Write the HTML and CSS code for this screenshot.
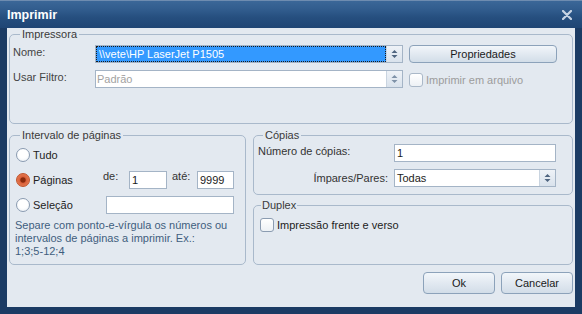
FILE: index.html
```html
<!DOCTYPE html>
<html>
<head>
<meta charset="utf-8">
<link rel="stylesheet" href="styles.css">
</head>
<body>
<div class="window">
  <div class="titlebar">
    <span class="title">Imprimir</span>
    <svg class="close" width="10" height="10" viewBox="0 0 10 10"><path d="M1 1L9 9M9 1L1 9" stroke="#c6d3e3" stroke-width="2.3" stroke-linecap="round"/></svg>
  </div>
  <div class="client">
    <fieldset class="group g-printer">
      <legend>Impressora</legend>
      <div class="prow">
        <span class="plabel">Nome:</span>
        <div class="combo">
          <div class="combo-text"><span class="sel">\\vete\HP LaserJet P1505</span></div>
          <div class="spin"><svg width="7" height="10" viewBox="0 0 7 10"><path d="M0.5 4L3.5 1L6.5 4Z M0.5 6L3.5 9L6.5 6Z" fill="#4f6580"/></svg></div>
        </div>
        <button class="btn btn-props">Propriedades</button>
      </div>
      <div class="prow">
        <span class="plabel">Usar Filtro:</span>
        <div class="combo">
          <div class="combo-text dis">Padrão</div>
          <div class="spin"><svg width="7" height="10" viewBox="0 0 7 10"><path d="M0.5 4L3.5 1L6.5 4Z M0.5 6L3.5 9L6.5 6Z" fill="#7f92a8"/></svg></div>
        </div>
        <div class="check dis-check"><span class="box"></span><span>Imprimir em arquivo</span></div>
      </div>
    </fieldset>

    <div class="lower">
      <fieldset class="group g-range">
        <legend>Intervalo de páginas</legend>
        <div class="rrow">
          <div class="ropt"><span class="radio"></span><span>Tudo</span></div>
        </div>
        <div class="rrow">
          <div class="ropt"><span class="radio on"></span><span>Páginas</span></div>
          <span class="ilabel w-de">de:</span>
          <div class="field w-from">1</div>
          <span class="ilabel w-ate">até:</span>
          <div class="field w-to">9999</div>
        </div>
        <div class="rrow">
          <div class="ropt wide"><span class="radio"></span><span>Seleção</span></div>
          <div class="field w-sel"></div>
        </div>
        <p class="help">Separe com ponto-e-vírgula os números ou<br>intervalos de páginas a imprimir. Ex.:<br>1;3;5-12;4</p>
      </fieldset>

      <div class="rightcol">
        <fieldset class="group g-copies">
          <legend>Cópias</legend>
          <div class="crow top">
            <span class="clabel">Número de cópias:</span>
            <div class="field w-copies">1</div>
          </div>
          <div class="crow">
            <span class="clabel right">Ímpares/Pares:</span>
            <div class="combo w-copies">
              <div class="combo-text plain">Todas</div>
              <div class="spin"><svg width="7" height="10" viewBox="0 0 7 10"><path d="M0.5 4L3.5 1L6.5 4Z M0.5 6L3.5 9L6.5 6Z" fill="#4f6580"/></svg></div>
            </div>
          </div>
        </fieldset>
        <fieldset class="group g-duplex">
          <legend>Duplex</legend>
          <div class="check"><span class="box"></span><span>Impressão frente e verso</span></div>
        </fieldset>
      </div>
    </div>

    <div class="actions">
      <button class="btn btn-dlg">Ok</button>
      <button class="btn btn-dlg">Cancelar</button>
    </div>
  </div>
</div>
</body>
</html>
```
FILE: styles.css
```css
* { box-sizing: border-box; }
html, body { margin: 0; padding: 0; }
body {
  width: 582px;
  height: 314px;
  overflow: hidden;
  font-family: "Liberation Sans", Arial, sans-serif;
  font-size: 11px;
  color: #2e2e2e;
  background: #1b3b64;
}
.window {
  width: 582px;
  height: 314px;
  background: #1b3b64;
  display: flex;
  flex-direction: column;
}
.titlebar {
  height: 28px;
  flex: none;
  display: flex;
  align-items: center;
  justify-content: space-between;
  padding: 0 10px 0 7px;
  border-top: 1px solid #6e8cb0;
  background: linear-gradient(#3b6798 0%, #305b8c 35%, #264f7f 60%, #1f4574 100%);
}
.title {
  color: #fff;
  font-weight: bold;
  font-size: 12.5px;
  line-height: 14px;
}
.close { display: block; }
.client {
  flex: 1;
  margin: 0 7px 7px 7px;
  background: #e3e9f0;
  padding: 0 2px;
  display: flex;
  flex-direction: column;
}
fieldset.group {
  margin: 0;
  min-width: 0;
  border: 1px solid #a9b9cb;
  border-radius: 5px;
  padding: 0;
}
legend {
  font-size: 11px;
  line-height: 13px;
  padding: 0 2px;
  color: #3a3a3a;
}
/* Impressora */
.g-printer { padding: 4px 0 35px 3px !important; }
.g-printer legend { margin-left: 7px; }
.prow {
  display: flex;
  align-items: flex-start;
  height: 18px;
}
.prow + .prow { margin-top: 7px; }
.plabel {
  width: 82px;
  line-height: 14px;
  color: #444;
}
.combo {
  width: 308px;
  height: 18px;
  border: 1px solid #a4b4c6;
  background: #fff;
  display: flex;
  margin-right: 6px;
}
.combo-text {
  flex: 1;
  min-width: 0;
  display: flex;
  align-items: center;
}
.combo-text.dis {
  color: #a2a2a2;
  padding-left: 1px;
}
.combo-text.plain { padding-left: 2px; color: #222; }
.sel {
  flex: 1;
  height: 16px;
  background: #3399ff;
  color: #fff;
  border: 1px dotted #1a1a1a;
  line-height: 14px;
  padding-left: 2px;
  white-space: nowrap;
}
.spin {
  width: 16px;
  flex: none;
  display: flex;
  align-items: center;
  justify-content: center;
  background: linear-gradient(#eef2f7, #d9e2ec);
  border-left: 1px solid #c9d4e0;
}
.spin svg { display: block; }
.btn {
  font-family: "Liberation Sans", Arial, sans-serif;
  font-size: 11px;
  color: #1a1a1a;
  border: 1px solid #8ca2ba;
  border-radius: 4px;
  background: linear-gradient(#f2f6fa 0%, #e2e9f1 50%, #d2dde8 100%);
  padding: 0;
  margin: 0;
}
.btn-props {
  width: 148px;
  height: 18px;
  line-height: 16px;
}
.check {
  display: flex;
  align-items: center;
  height: 14px;
}
.dis-check { margin-top: 3px; color: #9c9c9c; }
.box {
  width: 14px;
  height: 14px;
  border: 1px solid #8b9cb1;
  border-radius: 3px;
  background: linear-gradient(#ffffff, #edf1f5);
  margin-right: 3px;
  flex: none;
}
.dis-check .box { border-color: #aab8c8; }

/* lower area */
.lower {
  display: flex;
  gap: 7px;
  margin-top: 5px;
}
.g-range {
  width: 237px;
  flex: none;
  padding: 0 0 6px 6px !important;
}
.g-range legend { margin-left: 4px; }
.rrow {
  height: 25px;
  display: flex;
  align-items: center;
}
.ropt {
  width: 87px;
  display: flex;
  align-items: center;
  color: #222;
}
.ropt.wide { width: 90px; }
.radio {
  width: 14px;
  height: 14px;
  border-radius: 50%;
  border: 1px solid #8a9bb1;
  background: radial-gradient(circle at 50% 40%, #ffffff 45%, #e6ecf2 100%);
  margin-right: 3px;
  flex: none;
}
.radio.on {
  border-color: #bf532c;
  background: radial-gradient(circle, #8a2a0c 0, #8a2a0c 2.2px, #d9603a 3.2px, #ee8a5f 100%);
}
.ilabel {
  line-height: 13px;
  margin-bottom: 6px;
  color: #333;
}
.w-de { width: 26px; }
.w-ate { width: 25px; margin-left: 5px; }
.field {
  height: 18px;
  border: 1px solid #a4b4c6;
  background: #fff;
  padding: 0 2px;
  line-height: 16px;
  color: #1a1a1a;
}
.w-from { width: 38px; }
.w-to { width: 37px; }
.w-sel { width: 128px; }
.help {
  margin: 2px 0 0 -1px;
  line-height: 13px;
  color: #3f5e7e;
}
.rightcol {
  flex: 1;
  display: flex;
  flex-direction: column;
}
.g-copies { padding: 2px 0 7px 4px !important; }
.g-copies legend { margin-left: 5px; }
.crow {
  display: flex;
  align-items: center;
  height: 18px;
}
.crow.top { align-items: flex-start; }
.crow + .crow { margin-top: 7px; }
.clabel {
  width: 136px;
  line-height: 14px;
  color: #333;
}
.clabel.right { text-align: right; padding-right: 6px; }
.w-copies { width: 162px; margin-right: 0; }
.g-duplex {
  flex: 1;
  margin-top: 4px !important;
  padding: 6px 0 0 6px !important;
}
.g-duplex legend { margin-left: 1px; padding: 0 1px; }
.g-duplex .check { color: #222; }

.actions {
  display: flex;
  justify-content: flex-end;
  gap: 6px;
  margin-top: 7px;
}
.btn-dlg {
  width: 72px;
  height: 22px;
  line-height: 20px;
}
```
